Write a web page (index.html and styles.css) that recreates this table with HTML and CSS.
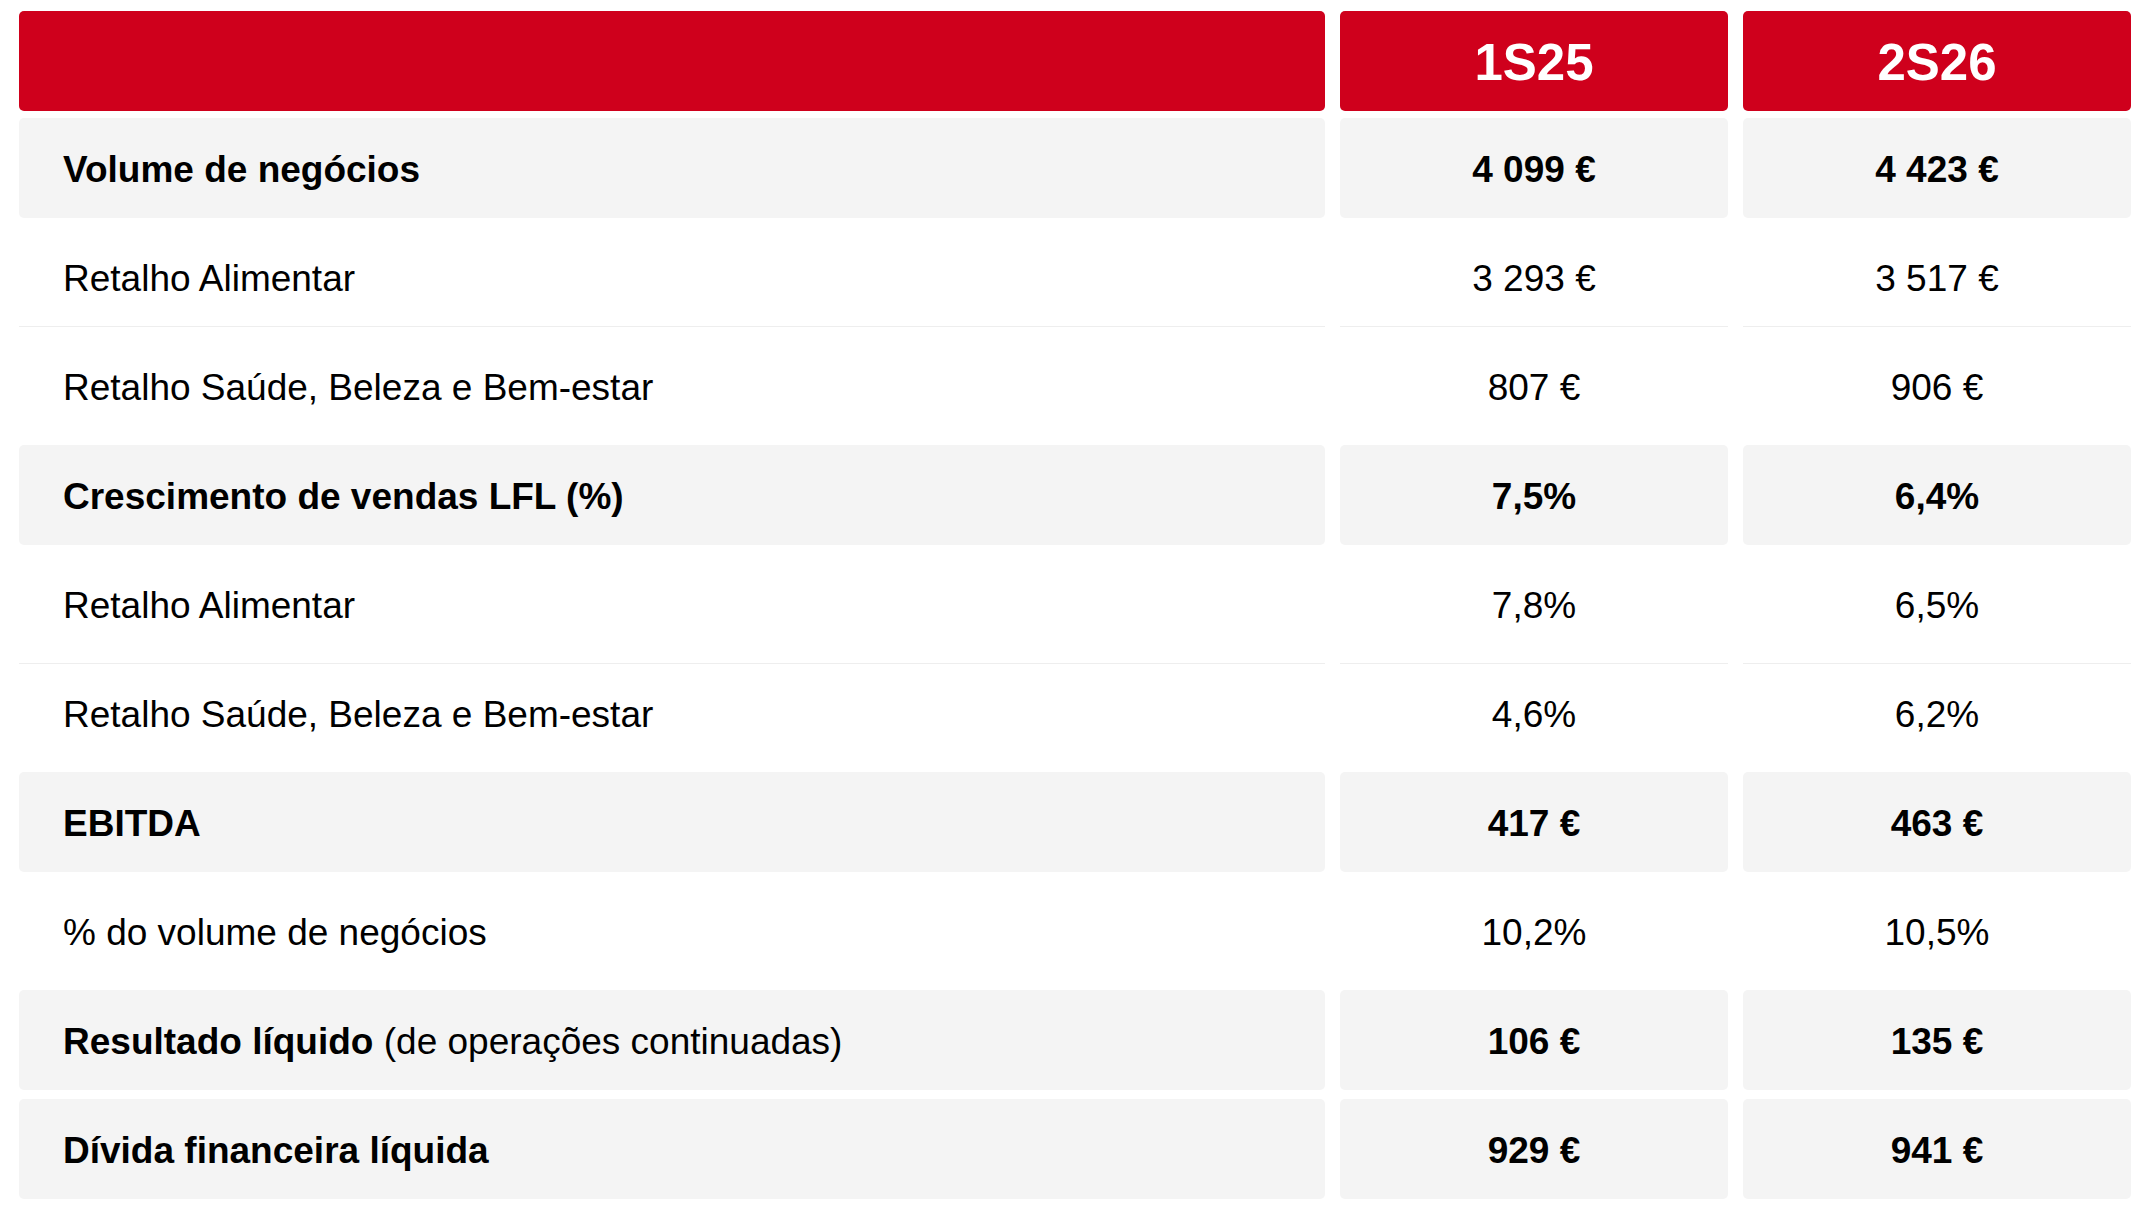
FILE: index.html
```html
<!DOCTYPE html>
<html lang="pt">
<head>
<meta charset="utf-8">
<title>Resultados</title>
<link rel="stylesheet" href="styles.css">
</head>
<body>
<div class="table">
  <div class="row head">
    <div class="cell label"></div>
    <div class="cell val">1S25</div>
    <div class="cell val">2S26</div>
  </div>
  <div class="body">
    <div class="row shaded strong">
      <div class="cell label">Volume de negócios</div>
      <div class="cell val">4&nbsp;099&nbsp;€</div>
      <div class="cell val">4&nbsp;423&nbsp;€</div>
    </div>
    <div class="row rule-below">
      <div class="cell label">Retalho Alimentar</div>
      <div class="cell val">3&nbsp;293&nbsp;€</div>
      <div class="cell val">3&nbsp;517&nbsp;€</div>
    </div>
    <div class="row">
      <div class="cell label">Retalho Saúde, Beleza e Bem-estar</div>
      <div class="cell val">807&nbsp;€</div>
      <div class="cell val">906&nbsp;€</div>
    </div>
    <div class="row shaded strong">
      <div class="cell label">Crescimento de vendas LFL (%)</div>
      <div class="cell val">7,5%</div>
      <div class="cell val">6,4%</div>
    </div>
    <div class="row">
      <div class="cell label">Retalho Alimentar</div>
      <div class="cell val">7,8%</div>
      <div class="cell val">6,5%</div>
    </div>
    <div class="row rule-above">
      <div class="cell label">Retalho Saúde, Beleza e Bem-estar</div>
      <div class="cell val">4,6%</div>
      <div class="cell val">6,2%</div>
    </div>
    <div class="row shaded strong">
      <div class="cell label">EBITDA</div>
      <div class="cell val">417&nbsp;€</div>
      <div class="cell val">463&nbsp;€</div>
    </div>
    <div class="row">
      <div class="cell label">% do volume de negócios</div>
      <div class="cell val">10,2%</div>
      <div class="cell val">10,5%</div>
    </div>
    <div class="row shaded strong">
      <div class="cell label">Resultado líquido <span class="note">(de operações continuadas)</span></div>
      <div class="cell val">106&nbsp;€</div>
      <div class="cell val">135&nbsp;€</div>
    </div>
    <div class="row shaded strong">
      <div class="cell label">Dívida financeira líquida</div>
      <div class="cell val">929&nbsp;€</div>
      <div class="cell val">941&nbsp;€</div>
    </div>
  </div>
</div>
</body>
</html>
```

FILE: styles.css
```css
html, body {
  margin: 0;
  padding: 0;
  background: #ffffff;
}

body {
  padding: 11px 19px 0 19px;
  font-family: "Liberation Sans", Arial, Helvetica, sans-serif;
  color: #000000;
}

.table {
  display: flex;
  flex-direction: column;
  gap: 7px;
}

.body {
  display: flex;
  flex-direction: column;
  gap: 9px;
}

.row {
  display: grid;
  grid-template-columns: 1fr 388px 388px;
  column-gap: 15px;
  height: 100px;
}

.cell {
  display: flex;
  align-items: center;
  box-sizing: border-box;
  padding-top: 4px;
  font-size: 37px;
  border-radius: 5px;
  white-space: nowrap;
}

.cell.label {
  padding-left: 44px;
}

.cell.val {
  justify-content: center;
}

.head .cell {
  background: #cf001c;
  color: #ffffff;
  font-weight: 700;
  font-size: 51px;
  padding-top: 2px;
}

.shaded .cell {
  background: #f4f4f4;
}

.strong .cell {
  font-weight: 700;
}

.strong .note {
  font-weight: 400;
  margin-left: 0.28em;
}

.rule-below .cell {
  border-bottom: 1px solid #eeeeee;
  border-radius: 0;
}

.rule-above .cell {
  border-top: 1px solid #eeeeee;
  border-radius: 0;
  padding-top: 3px;
}
```
